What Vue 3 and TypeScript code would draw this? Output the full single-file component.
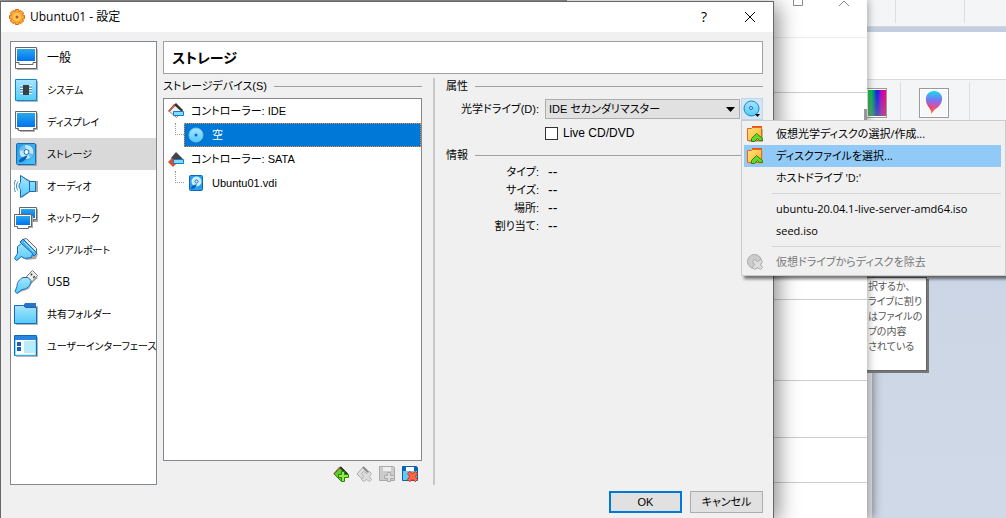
<script setup lang="ts">
import { ref } from 'vue'

interface Section {
  label: string
  icon: string
  long?: boolean
}

const sections: Section[] = [
  {
    label: '一般',
    icon: '<path d="M3 3h21v21h-21z" fill="#b4b4b4"/><path d="M1.5 1.5h21v21h-21z" fill="#fff" stroke="#666"/><path d="M3 3h18v12h-18z" fill="url(#screen)"/><path d="M2 16.5h3v2h14v-2h3" fill="none" stroke="#666"/>',
  },
  {
    label: 'システム',
    long: true,
    icon: '<path d="M3 3h21v21h-21z" fill="#b4b4b4"/><path d="M1.5 1.5h21v21h-21z" fill="url(#cyan)" stroke="#1583cf"/><path d="M6 8h12M6 10.500h12M6 13h12M6 15.500h12" stroke="#fff"/><path d="M6 9h12M6 11.500h12M6 14h12" stroke="#3d91b5"/><path d="M9 7h6v10h-6z" fill="#393f45"/>',
  },
  {
    label: 'ディスプレイ',
    long: true,
    icon: '<path d="M3 3h21v17h-3v2h-15v-2h-3z" fill="#b4b4b4"/><path d="M1.500 1.500h21v17h-3v2h-15v-2h-3z" fill="#fff" stroke="#666"/><path d="M3 3h18v14h-18z" fill="url(#screen)"/>',
  },
  {
    label: 'ストレージ',
    long: true,
    icon: '<path d="M4 2h19v22h-19z" fill="#a5a5a5"/><rect x="2.500" y="1.500" width="19" height="21" rx="1" fill="url(#disk)" stroke="#1769ba"/><circle cx="12.500" cy="10" r="7.500" fill="#bce9fa" stroke="#4099d0"/><path d="M5 9a8 8 0 0 1 6-6l1 5zM20 12a8 8 0 0 1-4 4l-2-5z" fill="#63bdf0"/><circle cx="12.500" cy="10" r="2.500" fill="#fff" stroke="#1769ba"/><path d="M4.500 20c1-4 5-5 9-7-1 4-4 8-9 7z" fill="#0861bf"/>',
  },
  {
    label: 'オーディオ',
    long: true,
    icon: '<path d="M8 2v7l-2 3 2 4v8l8-6h8v-11h-7z" fill="#aaa"/><path d="M6.500 1.500l9 6h6v10h-6l-9 6v-8c-2-2-2-5 0-7z" fill="url(#cyan)" stroke="#1769ba"/><path d="M15.500 7.500v10" stroke="#1769ba"/><path d="M4 7.500c-2 3-2 6 0 9M1.500 6c-2 4-2 9 0 12" fill="none" stroke="#3183c9"/>',
  },
  {
    label: 'ネットワーク',
    long: true,
    icon: '<path d="M7 3h17v13h-17z" fill="#aaa"/><path d="M5.500 1.500h17v12h-3v2h-14z" fill="#fff" stroke="#666"/><path d="M7 3h14v9h-14z" fill="url(#screen)"/><path d="M2 10h17v12h-15z" fill="#aaa"/><path d="M.5 8.500h17v12h-3v2h-11v-2h-3z" fill="#fff" stroke="#666"/><path d="M2 10h14v9h-14z" fill="url(#screen)"/>',
  },
  {
    label: 'シリアルポート',
    long: true,
    icon: '<path d="M9 3l15 13-2 5-9 1-6-3-4 4-1-3 3-4v-5z" fill="#aaa"/><path d="M8.500 1.500l4-1 10 10v4z" fill="#eee" stroke="#666"/><path d="M6 4l3-3 14 14-3 3z" fill="#43b4ef" stroke="#1769ba"/><path d="M7.500 5.500l11 10-1 4-7 1-3-2-5 4-2-2 3-5v-7z" fill="url(#cyan)" stroke="#1769ba"/><path d="M10 4l10 10" stroke="#b5efff"/>',
  },
  {
    label: 'USB',
    icon: '<path d="M18 2l6 6-6 5-3 6-8 3-5 2 2-6z" fill="#b5b5b5"/><path d="M12.500 6.500l6-6 5 5-6 7z" fill="#eee" stroke="#777"/><path d="M17 4l1 1M19.500 6.500l1 1" stroke="#333" stroke-width="2"/><path d="M9 7.500h5l3 3c0 5-4 9-9 9l-5 4-2-2 2-5c0-4 2-7 6-9z" fill="url(#cyan)" stroke="#1769ba"/>',
  },
  {
    label: '共有フォルダー',
    long: true,
    icon: '<path d="M2 4h22v19h-22z" fill="#b5b5b5"/><path d="M9 4l2-3h11v5h-13z" fill="#2874c9"/><path d="M.5 3.500h9l2 2h11v16h-22z" fill="url(#cyan)" stroke="#1769ba"/>',
  },
  {
    label: 'ユーザーインターフェース',
    long: true,
    icon: '<path d="M2 3h22v20h-22z" fill="#b5b5b5"/><path d="M.5 1.500h22v20h-22z" fill="#fff" stroke="#0b69c5"/><path d="M1 2h21v4h-21z" fill="#2785df"/><path d="M1.500 6v15h20v-15" fill="none" stroke="#84e6ff"/><path d="M3 8h4v4h-4zM3 13h4v4h-4z" fill="#1560bd"/><path d="M10 7h11v12h-11z" fill="#b7edfa"/>',
  },
]

const currentSection = ref('ストレージ')

const discIcon =
  '<circle cx="8.500" cy="8.500" r="7.500" fill="#176bb0"/><circle cx="8" cy="8" r="7" fill="url(#cyan)" stroke="#6cc9f5"/><circle cx="8" cy="8" r="1.500" fill="#0b6ac4"/>'
const diskIcon =
  '<rect x="1.500" y=".5" width="13" height="15" rx="1" fill="#299eea" stroke="#1267bd"/><circle cx="8.500" cy="6.500" r="5" fill="#c9effc"/><circle cx="8.500" cy="6.500" r="1.500" fill="#fff" stroke="#1267bd"/><path d="M3 14c0-3 3-4 6-5-1 3-3 5-6 5z" fill="#075cb9"/>'
const ideIcon =
  '<path d="M1.500 8.500l6-6 7 6-6 6z" fill="#eee" stroke="#888"/><path d="M.5 8.500l6-7" stroke="#c84525" stroke-width="1.500"/><path d="M6 2l2-2 7 7-1 2z" fill="#333"/><path d="M5.500 8.500h10v4h-10z" fill="#7edcff" stroke="#147bcf"/>'
const sataIcon =
  '<path d="M3 7l5-6 7 7-5 5z" fill="#444"/><path d="M0 11l4-4 5 5-4 4z" fill="#df4c28"/><path d="M5.500 8.500h10v4h-10z" fill="#7edcff" stroke="#147bcf"/>'
const folderIcon =
  '<path d="M2 3h14v13h-14z" fill="#b5b5b5"/><path d="M5 0h10v3h-10z" fill="#e95413"/><path d="M.5 2.500h4l1-1h9v13h-14z" fill="url(#folder)" stroke="#ed641b"/><path d="M4.500 12.500l5-5 6 5v2h-3l-2-2-3 3h-3z" fill="#65d82e" stroke="#25850b"/>'
const ejectIcon =
  '<circle cx="7.500" cy="7.500" r="7" fill="#ccc" stroke="#aaa"/><path d="M5.500 7.500l2-2 3 2 3-2 2 2-2 3 2 3-2 2-3-2-3 2-2-2 2-3z" fill="#ddd" stroke="#a9a9a9"/>'

const tree = [
  { label: 'コントローラー: IDE', icon: ideIcon, child: false },
  { label: '空', icon: discIcon, child: true },
  { label: 'コントローラー: SATA', icon: sataIcon, child: false },
  { label: 'Ubuntu01.vdi', icon: diskIcon, child: true },
]
const selectedNode = ref('空')

const tools = [
  {
    label: 'コントローラーの追加',
    disabled: false,
    icon: '<path d="M1 8l7-7 7 7-7 7z" fill="#62c92e" stroke="#357d1b"/><path d="M.5 8l6-7" stroke="#c5532a"/><path d="M7 1l7 7" stroke="#333" stroke-width="2"/><path d="M8.500 5.500h3v3h4v3h-4v4h-3v-4h-3v-3h3z" fill="#91ef42" stroke="#278211"/>',
  },
  {
    label: 'コントローラーの除去',
    disabled: true,
    icon: '<path d="M1 8l6-7 7 7-6 7z" fill="#dedede" stroke="#aaa"/><path d="M7 1l7 7" stroke="#888" stroke-width="2"/><path d="M5.500 7.500l2-2 3 2 3-2 2 2-2 3 2 3-2 2-3-2-3 2-2-2 2-3z" fill="#ddd" stroke="#b2b2b2"/>',
  },
  {
    label: 'ディスクの追加',
    disabled: true,
    icon: '<path d="M.5.5h14l1 1v13h-15z" fill="#ccc" stroke="#aaa"/><path d="M4 1h8v4h-8z" fill="#eee"/><path d="M8.500 6.500h3v3h4v3h-4v3h-3v-3h-3v-3h3z" fill="#ddd" stroke="#aaa"/>',
  },
  {
    label: 'ディスクの除去',
    disabled: false,
    icon: '<path d="M.5.5h14l1 1v13h-15z" fill="#65c9f5" stroke="#0861b5"/><path d="M3 1h10v4h-10z" fill="#fff"/><path d="M1 1h3v4h-3zM12 1h3v4h-3z" fill="#0967ba"/><path d="M5.500 7.500l2-2 3 2 3-2 2 2-2 3 2 3-2 2-3-2-3 2-2-2 2-3z" fill="#ff6545" stroke="#cb3418"/>',
  },
]

const info = ['タイプ:', 'サイズ:', '場所:', '割り当て:']
const liveDisc = ref(false)
const drive = ref('IDE セカンダリマスター')
</script>

<template>
  <div class="desktop">
    <svg class="defs" aria-hidden="true">
      <defs>
        <linearGradient id="screen" x2="0" y2="1"><stop stop-color="#2aa7ea" /><stop offset="1" stop-color="#0072ee" /></linearGradient>
        <linearGradient id="cyan" x2="0" y2="1"><stop stop-color="#a9e4ff" /><stop offset="1" stop-color="#51ccf7" /></linearGradient>
        <linearGradient id="disk" x2="1" y2="1"><stop stop-color="#269ce5" /><stop offset="1" stop-color="#4cc5fa" /></linearGradient>
        <linearGradient id="folder" x2="1" y2="1"><stop stop-color="#ffe27b" /><stop offset="1" stop-color="#ffb52c" /></linearGradient>
        <linearGradient id="pin" x2="0" y2="1"><stop stop-color="#13dceb" /><stop offset=".4" stop-color="#7974f5" /><stop offset=".7" stop-color="#e24c9a" /><stop offset="1" stop-color="#ffc21c" /></linearGradient>
      </defs>
    </svg>

    <section class="paint">
      <div class="strip top"><i></i><i></i></div>
      <div class="band"></div>
      <div class="blank"></div>
      <div class="strip ribbon">
        <span class="tile"><span class="rainbow"></span></span>
        <i></i>
        <span class="tile">
          <svg width="18" height="24" viewBox="0 0 18 24"><path d="M6 23c2-4-4-7-5-13C0 4 4 0 9 0s9 4 8 9c-1 7-7 8-11 14z" fill="url(#pin)" /><path d="M1 10c3 4 7 6 8 9-2 2-2 3-3 4 2-4-4-7-5-13z" fill="#ed4052" opacity=".6" /></svg>
        </span>
        <i></i>
      </div>
    </section>

    <div class="edge-window"></div>
    <aside class="hint">
      <div>択するか、</div>
      <div>ライブに割り</div>
      <div>はファイルの</div>
      <div>ブの内容</div>
      <div>されている</div>
    </aside>

    <section class="browser">
      <div class="caption">
        <svg width="60" height="8" viewBox="0 0 60 8"><path d="M2.500 0v5.500h9v-5.500M48 6l5-5 5 5" fill="none" stroke="#888" /></svg>
      </div>
      <div class="row r1"></div>
      <div class="row r2"></div>
      <div class="row r3"></div>
      <div class="row r4"></div>
      <div class="row r5"></div>
      <div class="thumb"></div>
    </section>

    <main class="dialog">
      <header class="titlebar">
        <svg width="16" height="16" viewBox="0 0 16 16">
          <path d="M6.500.5h3l.5 2 2-1 2.500 2.500-1 2 2 .5v3l-2 .5 1 2-2.500 2.500-2-1-.5 2h-3l-.5-2-2 1-2.500-2.500 1-2-2-.5v-3l2-.5-1-2 2.500-2.500 2 1z" fill="#ffa72e" stroke="#d56a13" />
          <circle cx="8" cy="8" r="4" fill="#ffc65c" /><circle cx="8" cy="8" r="1.500" fill="#b75a15" />
        </svg>
        <h1>Ubuntu01 - 設定</h1>
        <button class="cap" type="button" aria-label="ヘルプ">?</button>
        <button class="cap" type="button" aria-label="閉じる">
          <svg width="12" height="12" viewBox="0 0 12 12"><path d="M1 1l10 10M11 1l-10 10" stroke="#000" /></svg>
        </button>
      </header>

      <div class="body">
        <nav class="sections">
          <button v-for="s in sections" :key="s.label" type="button" :class="{ on: s.label === currentSection, long: s.long }" @click="currentSection = s.label">
            <svg width="24" height="24" viewBox="0 0 24 24" v-html="s.icon"></svg>
            <span>{{ s.label }}</span>
          </button>
        </nav>

        <div class="page">
          <h2>ストレージ</h2>
          <div class="split">
            <section class="devices">
              <h3>ストレージデバイス(S)</h3>
              <div class="tree">
                <button v-for="n in tree" :key="n.label" type="button" :class="{ child: n.child, on: n.label === selectedNode }" @click="selectedNode = n.label">
                  <i v-if="n.child" class="branch"></i>
                  <span class="node">
                    <svg width="16" height="16" viewBox="0 0 16 16" v-html="n.icon"></svg>
                    <span>{{ n.label }}</span>
                  </span>
                </button>
              </div>
              <div class="tools">
                <button v-for="t in tools" :key="t.label" type="button" :aria-label="t.label" :disabled="t.disabled">
                  <svg width="16" height="16" viewBox="0 0 16 16" v-html="t.icon"></svg>
                </button>
              </div>
            </section>

            <section class="details">
              <h3>属性</h3>
              <div class="field drive">
                <label for="drive">光学ドライブ(D):</label>
                <span class="combo">
                  <select id="drive" v-model="drive"><option>IDE セカンダリマスター</option></select>
                  <svg width="9" height="5" viewBox="0 0 9 5"><path d="M0 0h9l-4.500 5z" /></svg>
                </span>
                <span class="picker">
                  <button class="disc" type="button" aria-label="ディスクの選択">
                    <svg width="20" height="20" viewBox="0 0 20 20">
                      <circle cx="9.500" cy="9.500" r="7.500" fill="url(#cyan)" stroke="#1582d2" /><circle cx="9" cy="9" r="1.500" fill="#d8f4ff" stroke="#1769ba" /><path d="M13 15h5l-2.500 3z" />
                    </svg>
                  </button>
                  <div class="menu">
                    <button type="button"><svg width="16" height="16" viewBox="0 0 16 16" v-html="folderIcon"></svg><span>仮想光学ディスクの選択/作成...</span></button>
                    <button type="button" class="on"><svg width="16" height="16" viewBox="0 0 16 16" v-html="folderIcon"></svg><span>ディスクファイルを選択...</span></button>
                    <button type="button" class="plain">ホストドライブ 'D:'</button>
                    <hr />
                    <button type="button" class="plain">ubuntu-20.04.1-live-server-amd64.iso</button>
                    <button type="button" class="plain">seed.iso</button>
                    <hr />
                    <button type="button" disabled><svg width="16" height="16" viewBox="0 0 16 16" v-html="ejectIcon"></svg><span>仮想ドライブからディスクを除去</span></button>
                  </div>
                </span>
              </div>
              <div class="field live">
                <span></span>
                <label><input v-model="liveDisc" type="checkbox" />Live CD/DVD</label>
              </div>
              <h3>情報</h3>
              <dl>
                <template v-for="i in info" :key="i"><dt>{{ i }}</dt><dd>--</dd></template>
              </dl>
            </section>
          </div>
        </div>
      </div>

      <footer>
        <button type="button" class="default">OK</button>
        <button type="button">キャンセル</button>
      </footer>
    </main>
  </div>
</template>

<style>
body {
  margin: 0;
}
</style>

<style scoped>
* {
  box-sizing: border-box;
}
.desktop {
  position: relative;
  height: 100vh;
  overflow: hidden;
  background: #999;
  color: #000;
  font: 11px/16px "Liberation Sans", "Noto Sans CJK JP", sans-serif;
  font-feature-settings: "palt";
}
button,
select {
  margin: 0;
  padding: 0;
  border: 0;
  border-radius: 0;
  background: none;
  color: inherit;
  font: inherit;
  font-feature-settings: inherit;
  text-align: left;
  white-space: nowrap;
}
svg {
  display: block;
  flex: none;
}
h1,
h2,
h3,
dl,
dd {
  margin: 0;
  font-size: 11px;
  font-weight: normal;
}
.defs {
  position: absolute;
  width: 0;
  height: 0;
}

.paint {
  position: absolute;
  top: 0;
  right: 0;
  bottom: 0;
  width: 140px;
  background: linear-gradient(#c7d2e3, #cfd9e7);
}
.strip {
  display: flex;
  background: #f4f5f7;
}
.strip i {
  width: 1px;
  background: #dcdee0;
}
.top {
  height: 27px;
  padding: 0 41px 3px 29px;
  justify-content: space-between;
  border-bottom: 1px solid #d4d7dc;
}
.band {
  height: 5px;
  background: #c3cfe1;
}
.blank {
  height: 48px;
  background: #fff;
  border-bottom: 1px solid #d9dadb;
}
.ribbon {
  height: 195px;
  padding-top: 2px;
}
.ribbon i {
  margin: 0 18px 0 13px;
}
.tile {
  display: flex;
  align-items: center;
  justify-content: center;
  width: 30px;
  height: 30px;
  margin: 6px 7px 0 0;
  border: 1px solid #9a9a9a;
  background: #f8f8f8;
  box-shadow: inset 0 0 0 1px #fff;
}
.tile:first-child {
  width: 21px;
  margin-right: 0;
}
.rainbow {
  width: 18px;
  height: 26px;
  background: linear-gradient(#0000, #8888), linear-gradient(90deg, #0c2, #0b5 20%, #02e 50%, #b0c 75%, #f06);
}

.edge-window {
  position: absolute;
  right: 134px;
  top: 276px;
  bottom: 0;
  width: 12px;
  background: #d8dadd;
  box-shadow: 2px 0 8px #5558;
}
.hint {
  position: absolute;
  top: 277px;
  right: 79px;
  width: 62px;
  padding: 1px 0 16px 2px;
  border: 1px solid #666;
  background: #fff;
  box-shadow: 2px 2px 0 #777;
  color: #555;
  line-height: 15px;
  font-size: 10px;
  white-space: nowrap;
}

.browser {
  position: absolute;
  top: 0;
  right: 139px;
  bottom: 0;
  width: 300px;
  background: #fff;
  box-shadow: 1px 0 8px #5558;
}
.caption {
  height: 38px;
  padding-right: 16px;
  border-bottom: 1px solid #eee;
}
.caption svg {
  margin-left: auto;
}
.row {
  border-bottom: 1px solid #ccc;
}
.r1 {
  height: 55px;
}
.r2 {
  height: 207px;
}
.r3 {
  height: 81px;
}
.r4 {
  height: 57px;
}
.r5 {
  height: 45px;
}
.thumb {
  position: absolute;
  top: 109px;
  right: 0;
  width: 3px;
  height: 12px;
  background: #999;
}

.dialog {
  position: absolute;
  top: 1px;
  left: 0;
  right: 232px;
  bottom: 0;
  display: flex;
  flex-direction: column;
  border: 1px solid #666;
  border-bottom: 0;
  background: #f0f0f0;
  box-shadow: 4px 4px 20px #0007;
}
.titlebar {
  display: flex;
  align-items: center;
  flex: none;
  height: 30px;
  padding-left: 8px;
  background: #fff;
}
.titlebar h1 {
  flex: 1;
  margin-left: 5px;
  font-family: "Open Sans", "Noto Sans CJK JP", sans-serif;
  font-size: 12px;
}
.cap {
  display: flex;
  align-items: center;
  justify-content: center;
  width: 46px;
  height: 29px;
  font: 14px/16px "Open Sans", sans-serif;
}
.body {
  display: flex;
  flex: 1;
  min-height: 0;
  gap: 6px;
  padding: 9px 10px 0 9px;
}
.sections {
  width: 147px;
  flex: none;
  border: 1px solid #828790;
  background: #fff;
}
.sections button {
  display: flex;
  align-items: center;
  gap: 9px;
  width: 100%;
  height: 32px;
  padding-left: 3px;
  font-family: "Open Sans", "Noto Sans CJK JP", sans-serif;
  font-size: 12px;
}
.sections .long {
  font-size: 10px;
}
.sections button.on {
  background: #d9d9d9;
}
.page {
  display: flex;
  flex-direction: column;
  flex: 1;
  min-width: 0;
}
.page h2 {
  height: 33px;
  padding-left: 8px;
  border: 1px solid #a0a0a0;
  background: #fff;
  font-size: 14px;
  line-height: 32px;
  font-weight: bold;
}
.split {
  display: flex;
  flex: 1;
  min-height: 0;
  padding-top: 4px;
}
.devices {
  display: flex;
  flex-direction: column;
  flex: 259;
  min-width: 0;
}
.details {
  flex: 317;
  min-width: 0;
  margin-left: 11px;
  padding-left: 11px;
  border-left: 2px solid #c8c8c8;
}
h3 {
  display: flex;
  align-items: center;
  gap: 7px;
  height: 16px;
  line-height: 16px;
  white-space: nowrap;
}
h3::after {
  content: "";
  flex: 1;
  height: 1px;
  background: #a0a0a0;
}
.tree {
  flex: 1;
  margin-top: 4px;
  border: 1px solid #828790;
  background: #fff;
}
.tree button {
  display: flex;
  width: 100%;
  height: 24px;
}
.node {
  display: flex;
  flex: 1;
  align-items: center;
  gap: 7px;
  padding-left: 4px;
  border: 1px solid transparent;
  border-left-width: 0;
}
.child .node {
  gap: 8px;
  padding-left: 3px;
  border-left-width: 1px;
}
.on .node {
  border: 1px dotted #ff8728;
  background: #0078d7;
  color: #fff;
}
.branch {
  width: 9px;
  height: 12px;
  margin-left: 11px;
  border: 1px dotted #999;
  border-width: 0 0 1px 1px;
}
.tools {
  display: flex;
  justify-content: flex-end;
  gap: 7px;
  padding: 5px 4px 3px 0;
}
.field {
  display: flex;
  align-items: center;
}
.field > :first-child {
  width: 93px;
  margin-right: 6px;
  text-align: right;
  white-space: nowrap;
}
.drive {
  height: 22px;
  margin-top: 4px;
}
.combo {
  position: relative;
  display: flex;
  flex: 1;
  min-width: 0;
}
.combo select {
  width: 100%;
  height: 20px;
  padding-left: 3px;
  border: 1px solid #adadad;
  background: #e1e1e1;
  appearance: none;
}
.combo svg {
  position: absolute;
  top: 8px;
  right: 5px;
  pointer-events: none;
}
.picker {
  position: relative;
  margin-left: 1px;
}
.disc {
  display: block;
  border: 1px solid #b9d9f3;
  background: #d8e6f2;
}
.live {
  height: 26px;
}
.live label {
  display: flex;
  align-items: center;
  gap: 5px;
  font-size: 12px;
}
.live input {
  width: 13px;
  height: 13px;
  margin: 0;
  border: 1px solid #333;
  background: #fff;
  appearance: none;
}
.live input:checked {
  background: #333;
  box-shadow: inset 0 0 0 2px #fff;
}
.details h3:nth-of-type(2) {
  margin-top: 1px;
}
dl {
  display: grid;
  grid-template-columns: 93px 1fr;
  grid-auto-rows: 18px;
  column-gap: 9px;
  line-height: 18px;
}
dt {
  text-align: right;
}
dd {
  font-size: 14px;
}
.menu {
  position: absolute;
  top: 100%;
  left: 0;
  z-index: 2;
  width: 265px;
  padding: 2px 4px 2px 2px;
  border: 1px solid #ccc;
  background: #f0f0f0;
  box-shadow: 3px 3px 3px #0008;
  font-family: "Open Sans", "Noto Sans CJK JP", sans-serif;
}
.menu button {
  display: flex;
  align-items: center;
  gap: 13px;
  width: 100%;
  height: 22px;
  padding-left: 3px;
}
.menu .plain {
  padding-left: 32px;
}
.menu .on {
  background: #91c9f7;
}
.menu button:disabled {
  color: #787878;
}
.menu hr {
  height: 1px;
  margin: 4px 0 4px 28px;
  border: 0;
  background: #d5d5d5;
}
footer {
  display: flex;
  justify-content: flex-end;
  flex: none;
  gap: 8px;
  padding: 6px 10px 5px;
}
footer button {
  width: 73px;
  height: 22px;
  border: 1px solid #adadad;
  background: #e1e1e1;
  text-align: center;
}
footer .default {
  border: 2px solid #0078d7;
}
</style>
